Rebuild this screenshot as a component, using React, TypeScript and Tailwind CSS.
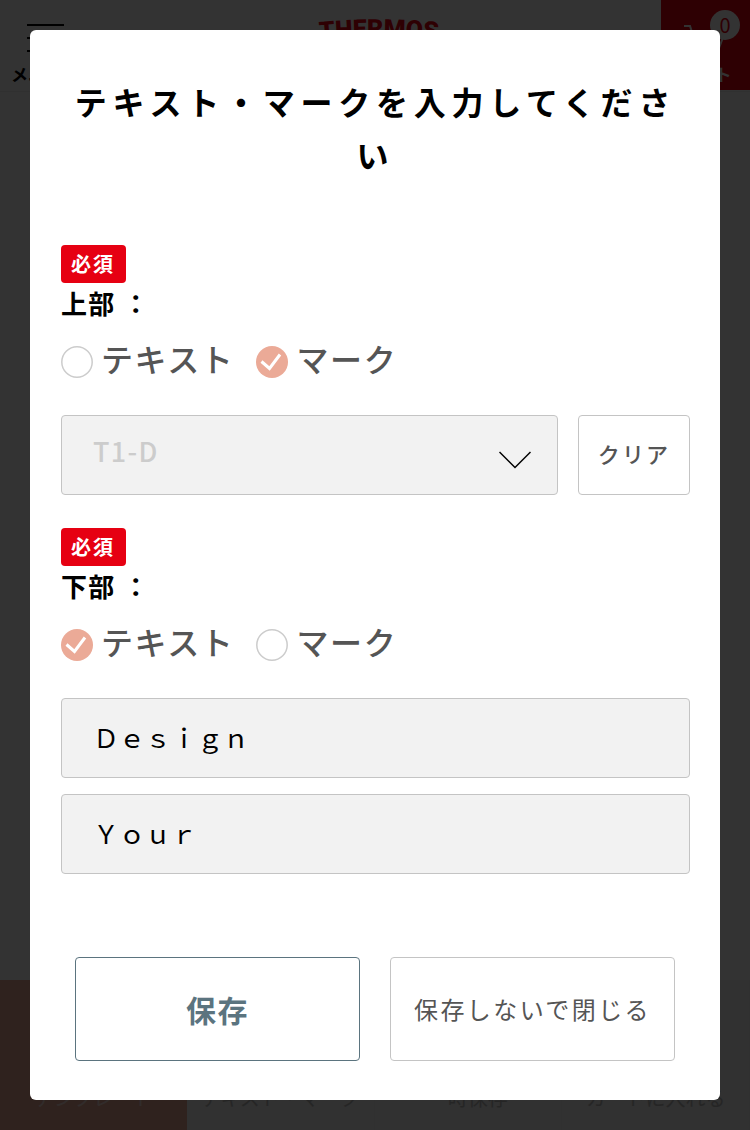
import { useState } from "react";

const tabs = ["テンプレート", "テキスト・マーク", "一時保存", "カートに入れる"];

type Kind = "text" | "mark";

function RequiredBadge() {
    return (
        <span className="inline-flex h-[38px] items-center rounded bg-[#e60012] pr-[11px] pl-[10px] text-xl font-bold tracking-widest text-white">
            必須
        </span>
    );
}

function KindOption({ name, checked, label, onSelect }: { name: string; checked: boolean; label: string; onSelect: () => void }) {
    return (
        <label className="flex cursor-pointer items-center gap-2 text-[32px] leading-[48px] font-medium tracking-wider text-[#555]">
            <input
                type="radio"
                name={name}
                checked={checked}
                onChange={onSelect}
                className="peer sr-only"
            />
            <svg viewBox="0 0 32 32" className="mt-2 size-8 shrink-0" aria-hidden="true">
                {checked ? (
                    <>
                        <circle cx="16" cy="16" r="16" fill="#ebaa97" />
                        <path d="M5.500 15.500 13.500 22.500 24 8.500" fill="none" stroke="#fff" strokeWidth="3" />
                    </>
                ) : (
                    <circle cx="16" cy="16" r="15.200" fill="#fff" stroke="#ccc" strokeWidth="1.500" />
                )}
            </svg>
            {label}
        </label>
    );
}

function KindPicker({ name, legend, value, onChange }: { name: string; legend: string; value: Kind; onChange: (kind: Kind) => void }) {
    return (
        <fieldset>
            <legend className="flex flex-col items-start">
                <RequiredBadge />
                <span className="text-[26px] leading-10 font-bold tracking-wider text-black">{legend} ：</span>
            </legend>
            <div className="mt-[11px] flex gap-[22px]">
                <KindOption name={name} label="テキスト" checked={value === "text"} onSelect={() => onChange("text")} />
                <KindOption name={name} label="マーク" checked={value === "mark"} onSelect={() => onChange("mark")} />
            </div>
        </fieldset>
    );
}

function PageBehind() {
    return (
        <div className="flex min-h-screen flex-col bg-white" aria-hidden="true">
            <header className="grid h-[92px] grid-cols-[1fr_auto_1fr] border-b border-[#eee]">
                <div className="flex flex-col items-center gap-2 justify-self-start pt-6 pl-[11px]">
                    <svg viewBox="0 0 37 28" className="h-7 w-[37px]" stroke="#000" strokeWidth="2">
                        <path d="M0 1h37M0 14h37M0 27h37" />
                    </svg>
                    <span className="text-[17px] leading-7 font-bold">メニュー</span>
                </div>
                <svg viewBox="0 0 160 60" className="mt-3 ml-2 h-[60px] w-[160px]">
                    <path id="logo-arc" d="M0 30Q80 20 160 30" fill="none" />
                    <text fill="#e60012" fontFamily="Roboto, sans-serif" fontSize="25" fontWeight="900">
                        <textPath href="#logo-arc" startOffset="50%" textAnchor="middle">THERMOS</textPath>
                    </text>
                </svg>
                <div className="relative flex h-[90px] w-[89px] flex-col items-center justify-between justify-self-end bg-[#e60012] pt-6 pb-1 text-white">
                    <svg viewBox="0 0 44 34" className="h-[34px] w-11" fill="none" stroke="#fff" strokeWidth="2">
                        <path d="M0 2h6l7 22h22l6-16H8" />
                        <circle cx="16" cy="30" r="2" />
                        <circle cx="32" cy="30" r="2" />
                    </svg>
                    <span className="text-[17px] leading-6 font-bold tracking-wider">カート</span>
                    <span className="absolute top-[10px] right-[10px] flex size-[30px] items-center justify-center rounded-full bg-white text-xl text-[#e60012]">0</span>
                </div>
            </header>
            <nav className="mt-auto flex h-[150px]">
                {tabs.map((tab, i) => (
                    <div
                        key={tab}
                        className={`flex flex-1 items-end justify-center border-[#eee] pb-[18px] text-xl whitespace-nowrap ${i === 0 ? "bg-[#ebaa97] text-white/60" : "border-r bg-[#f2f2f2] text-[#bbb]"}`}
                    >
                        {tab}
                    </div>
                ))}
            </nav>
        </div>
    );
}

export default function App() {
    const [upper, setUpper] = useState<Kind>("mark");
    const [lower, setLower] = useState<Kind>("text");
    const [lines, setLines] = useState(["Ｄｅｓｉｇｎ", "Ｙｏｕｒ"]);

    return (
        <div className="relative font-['Noto_Sans_CJK_JP',sans-serif]">
            <PageBehind />
            <div className="absolute inset-0 bg-black/80 p-[30px]">
                <div role="dialog" aria-modal="true" aria-labelledby="dialog-title" className="flex min-h-full flex-col rounded-md bg-white pt-[45px] pr-[30px] pb-[39px] pl-[31px]">
                    <h1 id="dialog-title" className="text-center text-[32px] leading-[53px] font-bold tracking-[0.18em] text-black">
                        テキスト・マークを入力してください
                    </h1>

                    <div className="mt-16">
                        <KindPicker name="upper" legend="上部" value={upper} onChange={setUpper} />
                        <div className="mt-[33px] flex gap-5">
                            <div className="relative flex-1">
                                <select
                                    aria-label="マーク"
                                    disabled
                                    className="h-20 w-full appearance-none rounded border border-[#c4c4c4] bg-[#f2f2f2] px-[31px] pb-2 text-[27px] font-medium tracking-wider text-[#ccc] opacity-100"
                                >
                                    <option>T1-D</option>
                                </select>
                                <svg viewBox="0 0 32 18" className="pointer-events-none absolute top-9 right-[27px] h-[18px] w-8" fill="none" stroke="#000" strokeWidth="1.500" aria-hidden="true">
                                    <path d="M.5 1 16 16.500 31.500 1" />
                                </svg>
                            </div>
                            <button type="button" className="h-20 w-28 rounded border border-[#c4c4c4] bg-white pb-1 text-[22px] font-medium tracking-widest text-[#555]">
                                クリア
                            </button>
                        </div>
                    </div>

                    <div className="mt-[33px]">
                        <KindPicker name="lower" legend="下部" value={lower} onChange={setLower} />
                        <div className="mt-[33px] flex flex-col gap-4">
                            {lines.map((line, i) => (
                                <input
                                    key={i}
                                    type="text"
                                    aria-label={`${i + 1}行目`}
                                    value={line}
                                    onChange={(e) => setLines(lines.map((l, j) => (j === i ? e.target.value : l)))}
                                    className="h-20 w-full rounded border border-[#c4c4c4] bg-[#f2f2f2] px-[31px] pb-1 text-[26px] text-black"
                                />
                            ))}
                        </div>
                    </div>

                    <div className="mt-auto grid grid-cols-2 gap-[30px] pr-[15px] pl-[14px]">
                        <button type="button" className="h-[104px] rounded border border-[#5b747f] bg-white text-[30px] font-bold tracking-wider text-[#5b747f]">
                            保存
                        </button>
                        <button type="button" className="h-[104px] rounded border border-[#c4c4c4] bg-white text-2xl tracking-widest text-[#555]">
                            保存しないで閉じる
                        </button>
                    </div>
                </div>
            </div>
        </div>
    );
}
